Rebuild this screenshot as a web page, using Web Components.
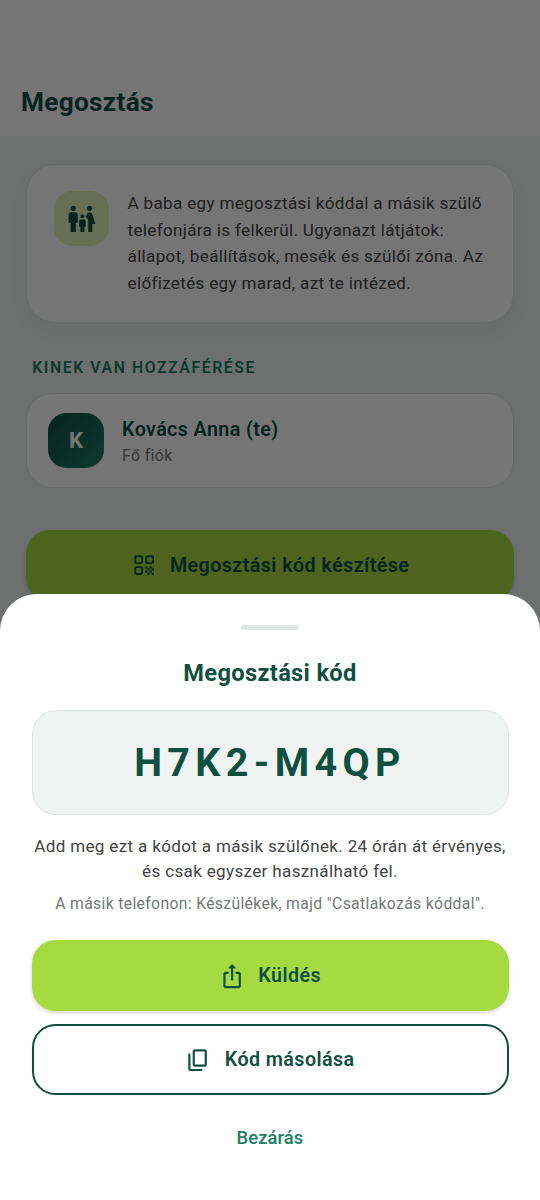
<!DOCTYPE html>
<html lang="hu">
<head>
<meta charset="utf-8">
<title>Megosztás</title>
<style>
  html, body { margin: 0; height: 100%; }
  body {
    font-family: Roboto, "Noto Sans", sans-serif;
    --deep: #0f4f3f; --mid: #1a7f63; --lime: #a5da40; --mist: #eff4f2; --ink: #444; --muted: #747876; --line: #e0e5e3;
  }
</style>
</head>
<body>
<share-screen></share-screen>
<script>
const ICONS = {
  family: '<path d="M16 4c0-1.11.89-2 2-2s2 .89 2 2-.89 2-2 2-2-.89-2-2zm4 18v-6h2.5l-2.54-7.63C19.68 7.55 18.92 7 18.06 7h-.12c-.86 0-1.63.55-1.9 1.37l-.86 2.58c1.08.6 1.82 1.73 1.82 3.05v8h3zm-7.5-10.5c.83 0 1.5-.67 1.5-1.5s-.67-1.5-1.5-1.5S11 9.17 11 10s.67 1.5 1.5 1.5zM5.5 6c1.11 0 2-.89 2-2s-.89-2-2-2-2 .89-2 2 .89 2 2 2zm2 16v-7H9V9c0-1.1-.9-2-2-2H4c-1.1 0-2 .9-2 2v6h1.5v7h4zm6.5 0v-4h1v-4c0-.82-.68-1.5-1.5-1.5h-2c-.82 0-1.5.68-1.5 1.5v4h1v4h3z"/>',
  qr: '<g fill="none" stroke="currentColor" stroke-width="1.7"><rect x="3.85" y="3.85" width="6.3" height="6.3" rx="1.1"/><rect x="13.85" y="3.85" width="6.3" height="6.3" rx="1.1"/><rect x="3.85" y="13.85" width="6.3" height="6.3" rx="1.1"/></g><path d="M19 19h2v2h-2zM13 13h2v2h-2zM15 15h2v2h-2zM13 17h2v2h-2zM15 19h2v2h-2zM17 17h2v2h-2zM17 13h2v2h-2zM19 15h2v2h-2z"/>',
  share: '<path d="M18 8h-2c-.55 0-1 .45-1 1s.45 1 1 1h2v11H6V10h2c.55 0 1-.45 1-1s-.45-1-1-1H6c-1.1 0-2 .9-2 2v11c0 1.1.9 2 2 2h12c1.1 0 2-.9 2-2V10c0-1.1-.9-2-2-2z"/><path d="M12 16c.55 0 1-.45 1-1V5h1.79c.45 0 .67-.54.35-.85l-2.79-2.79c-.2-.2-.51-.2-.71 0L8.85 4.15c-.31.31-.09.85.36.85H11v10c0 .55.45 1 1 1z"/>',
  copy: '<path d="M15 20H5V7c0-.55-.45-1-1-1s-1 .45-1 1v13c0 1.1.9 2 2 2h10c.55 0 1-.45 1-1s-.45-1-1-1zm5-4V4c0-1.1-.9-2-2-2H9c-1.1 0-2 .9-2 2v12c0 1.1.9 2 2 2h9c1.1 0 2-.9 2-2zm-2 0H9V4h9v12z"/>'
};

function define(name, render) {
  customElements.define(name, class extends HTMLElement {
    connectedCallback() {
      if (this.shadowRoot) return;
      this.attachShadow({ mode: 'open' }).innerHTML = render(this);
    }
  });
}

define('ui-icon', el => `
  <style>
    :host { display: block; flex: none; width: 26.25px; height: 26.25px; }
    :host([large]) { width: 31.5px; height: 31.5px; }
    svg { display: block; width: 100%; height: 100%; fill: currentColor; }
  </style>
  <svg viewBox="0 0 24 24" aria-hidden="true">${ICONS[el.getAttribute('name')]}</svg>`);

define('app-bar', () => `
  <style>
    :host { display: block; box-sizing: border-box; height: 136px; padding: 86px 21px 0; background: #fff; color: var(--deep);
      font-size: 26.25px; font-weight: 700; line-height: 32px; letter-spacing: .28px; }
  </style>
  <slot></slot>`);

define('icon-tile', () => `
  <style>
    :host { display: flex; flex: none; align-items: center; justify-content: center; width: 55.2px; height: 55.2px;
      border-radius: 18.4px; background: #e2f2b8; color: var(--deep); }
    :host([avatar]) { background: linear-gradient(135deg, #0f4f3f, #1a7f63); color: #fff; font-size: 22px; font-weight: 700; }
  </style>
  <slot></slot>`);

define('info-card', () => `
  <style>
    :host { display: flex; box-sizing: border-box; gap: 18.4px; padding: 26px 26px 26px 26.7px; height: 158.4px; background: #fff;
      border: 1px solid #e2e7e5; border-radius: 29px; box-shadow: 0 8px 24px rgba(15,79,63,.06); }
    p { margin: -1px 0 0; font-size: 17.06px; line-height: 26.44px; letter-spacing: .34px; color: var(--ink); white-space: nowrap; }
  </style>
  <slot name="lead"></slot><p><slot></slot></p>`);

define('section-label', () => `
  <style>
    :host { display: block; padding-left: 6px; font-size: 15.75px; font-weight: 600; line-height: 20px; letter-spacing: 1.6px;
      color: var(--mid); text-transform: uppercase; }
  </style>
  <slot></slot>`);

define('member-card', () => `
  <style>
    :host { display: flex; box-sizing: border-box; align-items: center; gap: 18.4px; height: 94.5px; padding: 0 21.2px; background: #fff;
      border: 1.3px solid var(--line); border-radius: 26px; }
    .name { font-size: 19.69px; font-weight: 600; line-height: 28px; letter-spacing: .4px; color: var(--deep); }
    .role { margin-top: 0; font-size: 15.75px; line-height: 24px; letter-spacing: .4px; color: var(--muted); }
    .text { padding-top: 4px; }
  </style>
  <slot name="lead"></slot>
  <div class="text"><div class="name"><slot></slot></div><div class="role"><slot name="role"></slot></div></div>`);

define('action-button', () => `
  <style>
    :host { display: flex; box-sizing: border-box; align-items: center; justify-content: center; gap: 13.1px; height: 70.9px;
      border-radius: 23.6px; color: var(--deep); font-size: 19.69px; font-weight: 600; letter-spacing: .43px; background: var(--lime);
      box-shadow: 0 2px 4px rgba(0,0,0,.16); }
    :host([outlined]) { background: #fff; border: 2px solid var(--deep); box-shadow: none; }
  </style>
  <slot name="icon"></slot><span><slot></slot></span>`);

define('code-box', () => `
  <style>
    :host { display: flex; box-sizing: border-box; align-items: center; justify-content: center; height: 104.6px;
      border: 1.3px solid var(--line); border-radius: 24px; background: var(--mist); color: var(--deep);
      font-size: 39.38px; font-weight: 700; letter-spacing: 5.4px; }
  </style>
  <span><slot></slot></span>`);

define('bottom-sheet', () => `
  <style>
    :host { display: flex; flex-direction: column; box-sizing: border-box; height: 606.3px; padding: 31.3px 31.5px 0;
      background: #fff; border-radius: 36.75px 36.75px 0 0; text-align: center; }
    .handle { align-self: center; flex: none; width: 57.8px; height: 5.3px; border-radius: 3px; background: var(--line); }
    h2 { margin: 27.4px 0 22.7px; font-size: 23.63px; font-weight: 700; line-height: 30px; letter-spacing: .34px; color: var(--deep); }
    .desc { margin: 19px -10px 0; font-size: 17.06px; line-height: 25px; letter-spacing: .34px; color: var(--ink); }
    .hint { margin: 9px 0 26.4px; font-size: 15.75px; line-height: 21px; letter-spacing: .33px; color: var(--muted); }
    .actions { display: grid; gap: 13.1px; }
    .close { margin-top: 30.4px; font-size: 18.38px; font-weight: 500; line-height: 24px; letter-spacing: .1px; color: var(--mid); }
  </style>
  <div class="handle"></div>
  <h2>Megosztási kód</h2>
  <code-box>H7K2-M4QP</code-box>
  <div class="desc">Add meg ezt a kódot a másik szülőnek. 24 órán át érvényes,<br>és csak egyszer használható fel.</div>
  <div class="hint">A másik telefonon: Készülékek, majd "Csatlakozás kóddal".</div>
  <div class="actions">
    <action-button><ui-icon slot="icon" name="share"></ui-icon>Küldés</action-button>
    <action-button outlined><ui-icon slot="icon" name="copy"></ui-icon>Kód másolása</action-button>
  </div>
  <div class="close">Bezárás</div>`);

define('share-screen', () => `
  <style>
    :host { display: block; position: relative; width: 540px; height: 1200px; overflow: hidden; background: var(--mist); }
    main { padding: 28.3px 26.25px 0; }
    section-label { margin: 35px 0 15.5px; }
    member-card { margin-bottom: 42.3px; }
    .scrim { position: absolute; inset: 0; display: flex; flex-direction: column; justify-content: flex-end; background: rgba(0,0,0,.54); }
  </style>
  <app-bar>Megosztás</app-bar>
  <main>
    <info-card>
      <icon-tile slot="lead"><ui-icon large name="family"></ui-icon></icon-tile>
      A baba egy megosztási kóddal a másik szülő<br>telefonjára is felkerül. Ugyanazt látjátok:<br>állapot, beállítások, mesék és szülői zóna. Az<br>előfizetés egy marad, azt te intézed.
    </info-card>
    <section-label>KINEK VAN HOZZÁFÉRÉSE</section-label>
    <member-card><icon-tile slot="lead" avatar>K</icon-tile>Kovács Anna (te)<span slot="role">Fő fiók</span></member-card>
    <action-button><ui-icon slot="icon" name="qr"></ui-icon>Megosztási kód készítése</action-button>
  </main>
  <div class="scrim"><bottom-sheet></bottom-sheet></div>`);
</script>
</body>
</html>
